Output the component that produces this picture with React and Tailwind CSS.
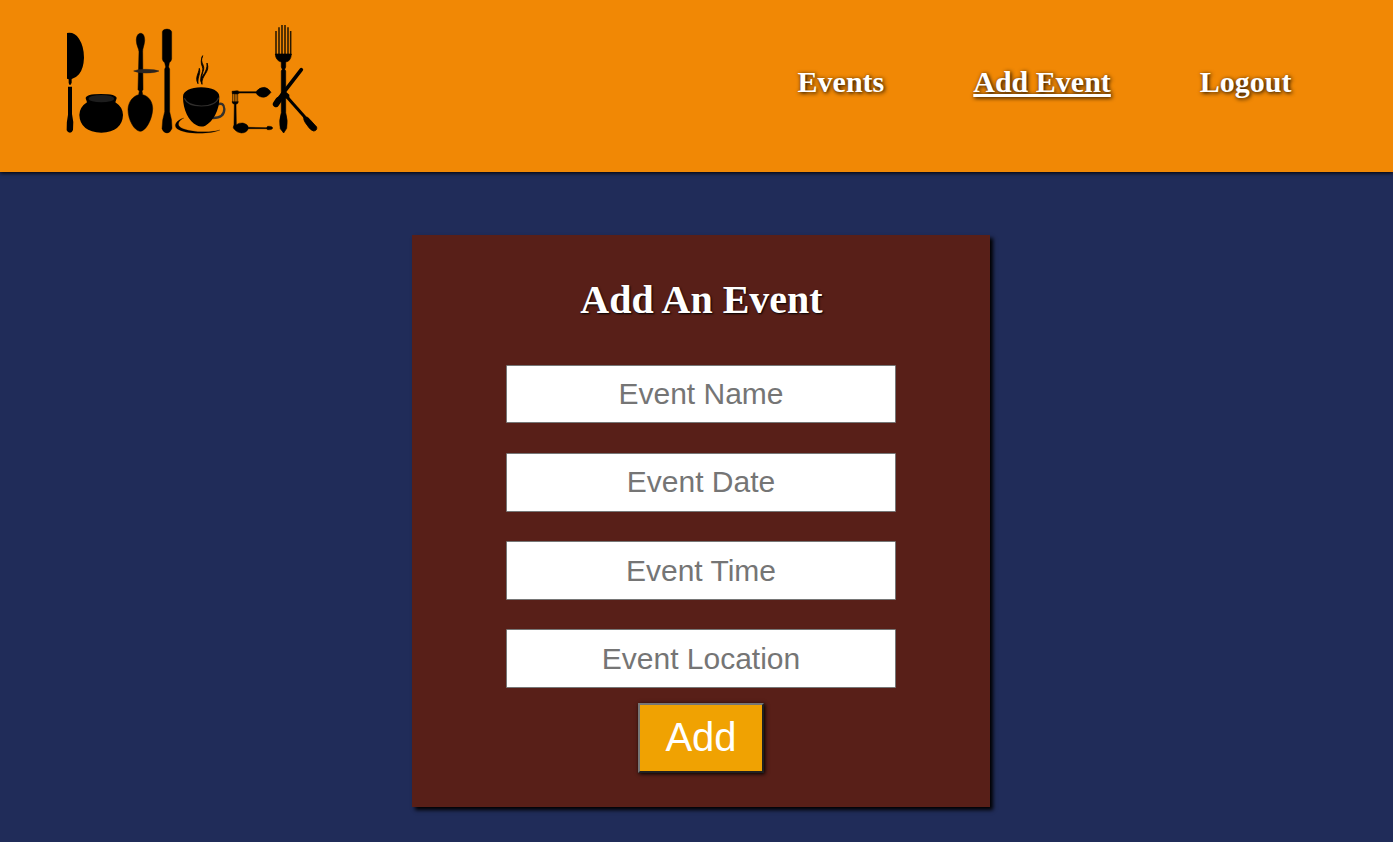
const NAV = [
  { label: "Events" },
  { label: "Add Event", active: true },
  { label: "Logout" },
];

const FIELDS = ["Event Name", "Event Date", "Event Time", "Event Location"];

function Logo() {
  return (
    <svg viewBox="30 21 765 342" className="ml-[65px] mt-[22px] h-[114px] w-[255px] shrink-0" role="img" aria-label="Potluck">
      {/* knife */}
      <path d="M36 54Q58 50 72 71Q87 94 87 128Q86 160 72 178Q62 190 50 192V203L47 209H43L41 204V193L36 191Z" />
      <path d="M39 215H51V297Q57 320 54 345Q51 353 45 353Q38 353 35 346Q34 320 39 299Z" />
      {/* pot */}
      <path d="M92 250Q92 237 138 237Q185 237 185 250L181 262Q204 277 204 300Q202 350 139 353Q75 350 73 300Q74 276 96 262Z" />
      <ellipse cx="139" cy="251" rx="38" ry="11" fill="#1d1d1d" />
      {/* spoon and cross bar */}
      <path d="M257 55C267 55 269 68 269 77C268 91 262 101 263 110L264 224L261 228L263 239C283 244 293 262 293 281C292 314 272 349 255 349C238 347 219 316 219 283C220 262 232 244 251 239L253 228L249 224L252 110C252 101 244 91 244 77C244 67 247 55 257 55Z" stroke="#000" strokeWidth="1.5" />
      <path d="M236 168Q249 162 273 163Q301 163 312 168Q300 174 273 174Q249 174 236 168Z" fill="#2b2420" stroke="#2b2420" strokeWidth="1.5" />
      {/* butter knife */}
      <path d="M322 50Q324 42 336 42Q347 42 350 50V132Q349 140 343 143L341 156L344 162V290Q352 315 351 340Q346 354 336 354Q325 353 321 341Q321 315 329 290V162L332 156L329 143Q323 140 322 132Z" stroke="#000" strokeWidth="1.2" />
      {/* saucer */}
      <path d="M387 309C365 314 354 331 366 341C390 359 468 358 495 345C466 354 404 352 378 338C365 330 370 317 387 309Z" stroke="#000" strokeWidth="0.5" />
      {/* cup */}
      <path d="M487 268Q507 261 508 282Q508 309 474 309" fill="none" stroke="#33302c" strokeWidth="7" />
      <path d="M384 245C384 228 408 217 438 217C471 217 493 228 493 245C494 288 473 319 451 332Q438 338 425 331C401 318 384 285 384 245Z" />
      <path d="M388 250C395 267 414 273 439 273C466 273 485 266 491 248" fill="none" stroke="#302e2c" strokeWidth="3.5" />
      {/* steam */}
      <path d="M443 122C432 145 453 148 444 170C440 180 441 187 438 199C434 181 448 168 442 155C437 144 438 132 443 122Z" stroke="#000" strokeWidth="2.5" />
      <path d="M456 144C467 172 438 180 441 208C429 186 459 177 456 144Z" stroke="#000" strokeWidth="2.5" />
      <path d="M433 160C438 176 427 184 429 206C419 188 431 177 433 160Z" stroke="#000" strokeWidth="2.5" />
      {/* small cutlery forming the letter C */}
      <path d="M531 229L547 227L554 230H603Q613 217 628 217Q640 219 648 232Q637 247 626 247Q611 247 603 234H554L547 237L532 236Z" stroke="#000" strokeWidth="1.5" />
      <path d="M533 234V262M538 234V262M543 234V262M548 234V262" fill="none" stroke="#000" strokeWidth="2" />
      <path d="M531 260H550Q549 267 543 268L544 329Q552 323 564 324Q579 328 580 337L634 338L638 334Q652 333 653 339Q652 345 638 344L634 341H580Q574 354 559 354Q546 353 538 343Q532 338 537 330L538 268Q532 266 531 260Z" stroke="#000" strokeWidth="1.5" />
      {/* large fork */}
      <path d="M663 48V120M672 37V120M681 30V120M690 30V120M699 37V120M707 48V120" fill="none" stroke="#281800" strokeWidth="4.6" />
      <path d="M661 117H709Q708 139 692 141V156L689 163L692 168V293Q699 316 695 340L686 354L676 341Q671 316 679 293V168L682 163L679 156V141Q662 137 661 117Z" stroke="#000" strokeWidth="2" />
      {/* crossed utensils */}
      <path d="M739 164L663 262" fill="none" stroke="#000" strokeWidth="11" strokeLinecap="round" />
      <path d="M671 255L663 267" fill="none" stroke="#000" strokeWidth="19" strokeLinecap="round" />
      <path d="M676 238L687 225L703 239V251L690 250L680 256Z" />
      <path d="M690 239L750 307" fill="none" stroke="#000" strokeWidth="9" />
      <path d="M746 304Q759 305 764 313L785 336Q787 347 776 348Q768 346 762 338L751 323Q745 315 746 304Z" stroke="#000" strokeWidth="2.5" />
    </svg>
  );
}

export default function App() {
  return (
    <div className="flex h-[842px] flex-col overflow-hidden bg-[#202c59] font-['Liberation_Serif',serif]">
      <header className="relative flex h-[172px] shrink-0 items-start justify-between bg-[#f18805] shadow-[0_1px_4px_#000]">
        <Logo />
        <nav className="mr-[101.5px] mt-[59px] flex gap-[89px] text-[30px] font-bold leading-[45px] text-white [text-shadow:1px_1px_4px_#000]">
          {NAV.map((item) => (
            <a key={item.label} href="#" className={item.active ? "underline" : ""}>
              {item.label}
            </a>
          ))}
        </nav>
      </header>
      <main className="flex justify-center pl-[9px] pt-[63px]">
        <form className="flex h-[572px] w-[578px] flex-col items-center bg-[#581f18] shadow-[3px_3px_4px_#000]">
          <h1 className="mt-[42px] pl-px text-[40px] font-bold leading-[46px] text-white [text-shadow:1px_1px_2px_#000]">Add An Event</h1>
          <div className="mt-[42px] flex flex-col gap-[29.65px]">
            {FIELDS.map((label) => (
              <input
                key={label}
                type="text"
                placeholder={label}
                className="h-[58.45px] w-[390px] rounded-[1px] border border-[#767676] bg-white pt-[0.3px] text-center font-['Liberation_Sans',sans-serif] text-[30px] placeholder:text-[#757575]"
              />
            ))}
          </div>
          <button
            type="button"
            className="mt-[15px] h-[70px] w-[126px] border-2 border-b-[#212121] border-l-[#767676] border-r-[#212121] border-t-[#767676] bg-[#f0a202] pb-[2px] font-['Liberation_Sans',sans-serif] text-[40px] leading-none text-white shadow-[1px_1px_4px_#000]"
          >
            Add
          </button>
        </form>
      </main>
    </div>
  );
}
